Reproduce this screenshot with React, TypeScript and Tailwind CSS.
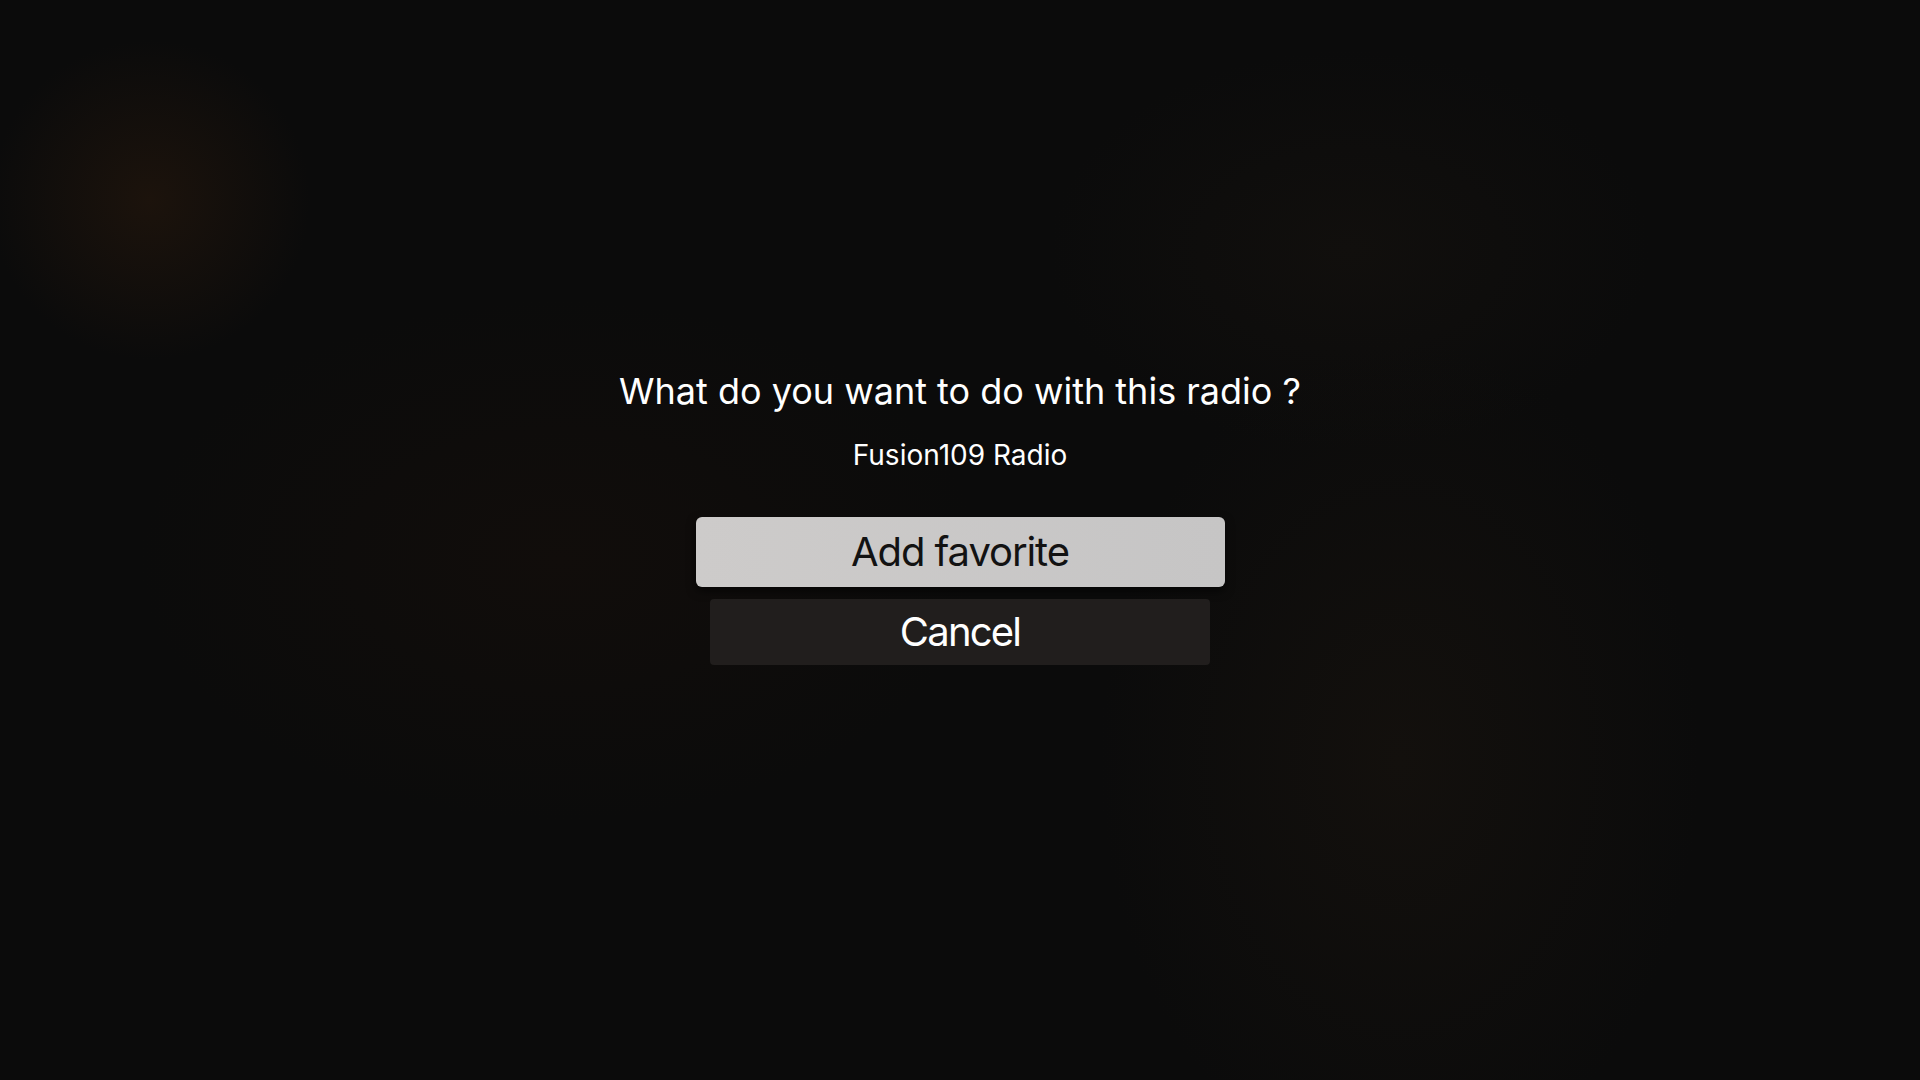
import React from "react";

const App = () => {
  return (
    <div className="w-[1920px] h-[1080px] overflow-hidden bg-[#0b0b0b] bg-[radial-gradient(circle_at_150px_200px,#1c130c_0px,transparent_160px),radial-gradient(ellipse_420px_260px_at_560px_560px,#110d0b_0%,transparent_100%),radial-gradient(ellipse_300px_420px_at_1400px_760px,#13100d_0%,transparent_100%),radial-gradient(ellipse_300px_200px_at_1350px_250px,#110f0d_0%,transparent_100%)] font-['Inter','Liberation_Sans',sans-serif]">
      <div className="flex flex-col items-center pt-[369px]">
        <p className="text-white text-[36px] leading-[44px] tracking-[0px]">
          What do you want to do with this radio ?
        </p>
        <p className="mt-[25px] text-white text-[28px] leading-[34px] tracking-[0px]">
          Fusion109 Radio
        </p>

        <div className="mt-[45px] flex flex-col items-center gap-[12px]">
          <div className="w-[529px] h-[70px] rounded-[6px] bg-[#c9c7c7] bg-gradient-to-r from-[#cdcbca] to-[#c6c5c5] shadow-[0_4px_10px_rgba(0,0,0,0.6)] flex items-center justify-center">
            <span className="text-[#121212] text-[40px] leading-[70px] tracking-[-1.1px]">
              Add favorite
            </span>
          </div>
          <div className="w-[500px] h-[66px] rounded-[4px] bg-[#211e1d] flex items-center justify-center">
            <span className="text-white text-[40px] leading-[66px] tracking-[-1.8px]">
              Cancel
            </span>
          </div>
        </div>
      </div>
    </div>
  );
};

export default App;
